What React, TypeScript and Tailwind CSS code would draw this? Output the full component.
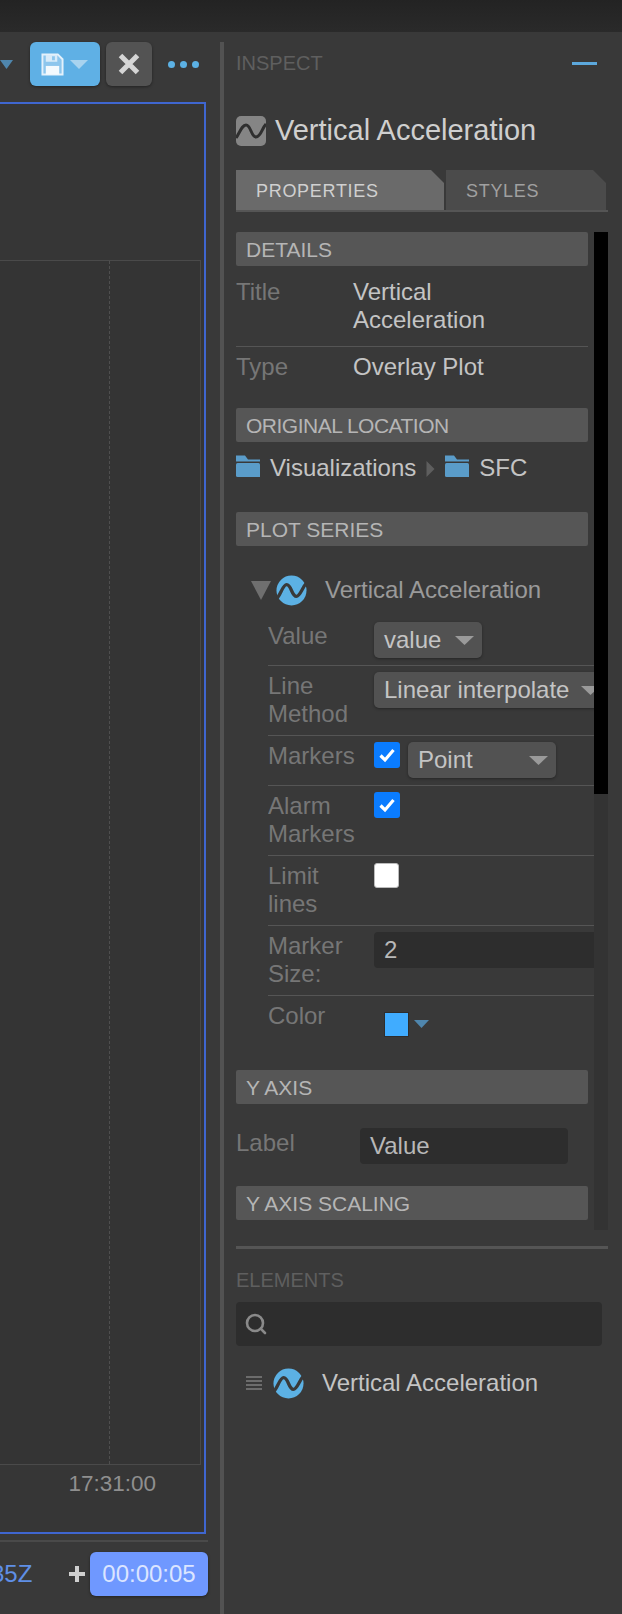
import React from 'react';
import { Search } from 'lucide-react';

const Wave = ({ className = '' }: { className?: string }) => (
    <svg viewBox="0 0 32 32" className={className}>
        <circle cx="16" cy="16" r="15.5" fill="#5cb1e4" />
        <path d="M1 24 C5 20 7 10 11 10 C16 10 16 22 21 22 C25 22 27 13 31 9" fill="none" stroke="#393939" strokeWidth="3.4" />
    </svg>
);

const Folder = () => (
    <svg viewBox="0 0 24 24" className="w-6 h-6 shrink-0">
        <path d="M0 1.5 L9 1.5 L12 5.5 L24 5.5 L24 7.5 L0 7.5 Z" fill="#5a9cc9" />
        <path d="M1.5 9 L22.5 9 Q24 9 24 10.5 L24 23 L1.5 23 Q0 23 0 21.5 L0 10.5 Q0 9 1.5 9 Z" fill="#5a9cc9" />
    </svg>
);

const Caret = ({ className = '' }: { className?: string }) => (
    <svg viewBox="0 0 20 10" preserveAspectRatio="none" className={className}>
        <path d="M0 0 L20 0 L10 10 Z" fill="currentColor" />
    </svg>
);

const Check = () => (
    <svg viewBox="0 0 26 26" className="w-[26px] h-[26px] shrink-0 rounded-[3px] bg-[#0a7cff]">
        <path d="M6.5 13.5 L11 18 L19.5 8" fill="none" stroke="#fff" strokeWidth="3.2" />
    </svg>
);

const SectionHeader = ({ title, className = '' }: { title: string; className?: string }) => (
    <div className={`h-[34px] flex items-center px-[10px] rounded-[2px] bg-[#565656] text-[21px] text-[#b5b5b5] leading-none whitespace-nowrap ${className}`}>{title}</div>
);

const Select = ({ label, className = '' }: { label: string; className?: string }) => (
    <div className={`h-9 flex items-center justify-between pl-[10px] pr-[8px] rounded-[5px] bg-[#525252] shadow-[0_1px_3px_rgba(0,0,0,0.35)] text-[24px] text-[#c4c4c4] ${className}`}>
        <span className="whitespace-nowrap">{label}</span>
        <Caret className="w-[19px] h-[9px] ml-3 shrink-0 text-[#9a9a9a]" />
    </div>
);

const SeriesRow = ({ label, height, children, last }: { label: React.ReactNode; height: string; children?: React.ReactNode; last?: boolean }) => (
    <div className={`flex ${height} ${last ? '' : 'border-b border-[#555]'}`}>
        <div className="w-[106px] shrink-0 pt-[6px] text-[24px] leading-[28px] text-[#767676]">{label}</div>
        <div className="flex-1 min-w-0 flex items-start gap-2 pt-[6px]">{children}</div>
    </div>
);

export default function App() {
    return (
        <div className="w-[622px] h-[1614px] overflow-hidden bg-[#393939] font-['Liberation_Sans',Arial,sans-serif]">
            <div className="h-8 bg-gradient-to-b from-[#232323] to-[#2a2a2a]"></div>

            <div className="flex h-[1582px]">
                {/* Main view */}
                <div className="w-[220px] shrink-0 flex flex-col">
                    <div className="h-[70px] pt-[10px] flex items-start">
                        <Caret className="w-[13px] h-[9px] mt-[18px] text-[#4f86ad]" />
                        <div className="ml-[17px] w-[70px] h-[44px] rounded-[6px] bg-[#5fb0e5] shadow-[0_1px_3px_rgba(0,0,0,0.4)] flex items-center pl-[11px] gap-[6px]">
                            <svg viewBox="0 0 24 24" className="w-[23px] h-[25px]">
                                <path d="M1.5 1.5 H17.5 L22.5 6.5 V22.5 H1.5 Z" fill="#e4f1fb" fillOpacity="0.35" stroke="#e4f1fb" strokeWidth="2" />
                                <path d="M5 2 H17 V9 H5 Z M11.5 3.5 V7.5 H14.5 V3.5 Z" fillRule="evenodd" fill="#d8ebf9" />
                                <rect x="5" y="13.5" width="14" height="9" fill="#f4fafe" />
                            </svg>
                            <Caret className="w-[18px] h-[9px] text-[#a8d3ef]" />
                        </div>
                        <div className="ml-[6px] w-[46px] h-[44px] rounded-[6px] bg-[#535353] shadow-[0_1px_3px_rgba(0,0,0,0.4)] flex items-center justify-center">
                            <svg viewBox="0 0 24 24" className="w-6 h-6">
                                <path d="M3.5 3.5 L20.5 20.5 M20.5 3.5 L3.5 20.5" stroke="#d5d5d5" strokeWidth="5" />
                            </svg>
                        </div>
                        <div className="ml-[16px] h-[44px] flex items-center gap-[5px]">
                            <span className="w-[7px] h-[7px] rounded-full bg-[#5cb1e4]"></span>
                            <span className="w-[7px] h-[7px] rounded-full bg-[#5cb1e4]"></span>
                            <span className="w-[7px] h-[7px] rounded-full bg-[#5cb1e4]"></span>
                        </div>
                    </div>

                    <div className="w-[206px] h-[1432px] bg-[#363636] border-t-2 border-r-2 border-b-2 border-[#3f66d0] flex flex-col">
                        <div className="h-[156px] shrink-0"></div>
                        <div className="w-[201px] h-[1205px] shrink-0 border-t border-r border-b border-[#4a4a4a] bg-[#343434]">
                            <div className="w-[110px] h-full border-r border-dashed border-[#4f4f4f]"></div>
                        </div>
                        <div className="w-[156px] pt-[6px] text-right text-[22.5px] leading-[26px] text-[#8f8f8f]">17:31:00</div>
                    </div>

                    <div className="w-[208px] mt-[6px] border-t-2 border-[#4a4a4a]"></div>

                    <div className="w-[208px] mt-[10px] flex items-center justify-between">
                        <span className="-ml-[9px] text-[24px] text-[#5f8fe6] leading-none">35Z</span>
                        <div className="flex items-center gap-[5px]">
                            <svg viewBox="0 0 16 16" className="w-[16px] h-[16px]">
                                <path d="M8 0 V16 M0 8 H16" stroke="#cfcfcf" strokeWidth="4" />
                            </svg>
                            <div className="w-[118px] h-[44px] rounded-[6px] bg-[#6f98ff] shadow-[0_1px_3px_rgba(0,0,0,0.4)] flex items-center justify-center text-[24px] text-[#dbe5ff]">00:00:05</div>
                        </div>
                    </div>
                </div>

                <div className="w-[4px] shrink-0 mt-[10px] bg-[#525252]"></div>

                {/* Inspector */}
                <div className="w-[372px] ml-3 shrink-0 flex flex-col">
                    <div className="h-[40px] mt-[11px] flex items-center justify-between pr-[11px] text-[20px] text-[#5f5f5f]">
                        <span>INSPECT</span>
                        <span className="w-[25px] h-[3px] bg-[#5ca8dc]"></span>
                    </div>

                    <div className="mt-[33px] h-[30px] flex items-center gap-[9px]">
                        <svg viewBox="0 0 30 30" className="w-[30px] h-[30px] rounded-[5px] bg-[#858585]">
                            <path d="M0 22 C4 16 6 9 10 9 C15 9 15 21 20 21 C25 21 26 12 30 8" fill="none" stroke="#2f2f2f" strokeWidth="3" />
                        </svg>
                        <span className="text-[29px] text-[#cfcfcf] whitespace-nowrap">Vertical Acceleration</span>
                    </div>

                    <div className="mt-[24px] h-[42px] flex gap-[2px] border-b-2 border-[#555]">
                        <div className="w-[208px] flex items-center pl-5 pt-[3px] bg-[#6a6a6a] text-[18px] tracking-[0.7px] text-[#d0d0d0] [clip-path:polygon(0_0,calc(100%-13px)_0,100%_13px,100%_100%,0_100%)]">PROPERTIES</div>
                        <div className="w-[160px] flex items-center pl-5 pt-[3px] bg-[#4b4b4b] text-[18px] tracking-[0.7px] text-[#a0a0a0] [clip-path:polygon(0_0,calc(100%-13px)_0,100%_13px,100%_100%,0_100%)]">STYLES</div>
                    </div>

                    <div className="mt-[20px] h-[998px] flex overflow-hidden">
                        <div className="w-[352px] shrink-0">
                            <SectionHeader title="DETAILS" />
                            <div className="h-[81px] pt-[12px] flex border-b border-[#555] text-[24px] leading-[28px]">
                                <span className="w-[117px] shrink-0 text-[#767676]">Title</span>
                                <span className="text-[#c4c4c4]">Vertical<br />Acceleration</span>
                            </div>
                            <div className="h-[61px] pt-[6px] flex text-[24px] leading-[28px]">
                                <span className="w-[117px] shrink-0 text-[#767676]">Type</span>
                                <span className="text-[#c4c4c4]">Overlay Plot</span>
                            </div>

                            <SectionHeader title="ORIGINAL LOCATION" className="tracking-[-0.5px]" />
                            <div className="h-[70px] pt-[12px] flex items-start text-[24px] leading-[28px] text-[#c4c4c4]">
                                <Folder />
                                <span className="ml-[10px]">Visualizations</span>
                                <svg viewBox="0 0 10 20" className="w-[9px] h-[16px] mt-[7px] ml-[10px] mr-[10px]">
                                    <path d="M0 0 L10 10 L0 20 Z" fill="#5e5e5e" />
                                </svg>
                                <Folder />
                                <span className="ml-[10px]">SFC</span>
                            </div>

                            <SectionHeader title="PLOT SERIES" />

                            <div className="mt-[27px] h-[34px] pl-[15px] flex items-center text-[24px] text-[#9a9a9a]">
                                <Caret className="w-[20px] h-[19px] text-[#6f6f6f]" />
                                <Wave className="w-[31px] h-[31px] ml-[5px]" />
                                <span className="ml-[18px] whitespace-nowrap">Vertical Acceleration</span>
                            </div>

                            <div className="mt-[9px] ml-[32px] w-[326px] overflow-hidden">
                                <SeriesRow label="Value" height="h-[50px]">
                                    <Select label="value" className="w-[108px]" />
                                </SeriesRow>
                                <SeriesRow label={<>Line<br />Method</>} height="h-[70px]">
                                    <Select label="Linear interpolate" className="w-[226px] shrink-0" />
                                </SeriesRow>
                                <SeriesRow label="Markers" height="h-[50px]">
                                    <Check />
                                    <Select label="Point" className="w-[148px]" />
                                </SeriesRow>
                                <SeriesRow label={<>Alarm<br />Markers</>} height="h-[70px]">
                                    <Check />
                                </SeriesRow>
                                <SeriesRow label={<>Limit<br />lines</>} height="h-[70px]">
                                    <div className="w-[25px] h-[25px] mt-[1px] rounded-[3px] bg-white border border-[#bbb]"></div>
                                </SeriesRow>
                                <SeriesRow label={<>Marker<br />Size:</>} height="h-[70px]">
                                    <div className="w-[240px] h-9 shrink-0 flex items-center pl-[10px] rounded-[4px] bg-[#2d2d2d] text-[24px] text-[#b8b8b8]">2</div>
                                </SeriesRow>
                                <SeriesRow label="Color" height="h-[74px]" last>
                                    <div className="ml-[10px] mt-[10px] w-[25px] h-[25px] bg-[#40acff] border border-[#2d2d2d]"></div>
                                    <Caret className="w-[15px] h-[8px] mt-[18px] -ml-[3px] text-[#4f86ad]" />
                                </SeriesRow>
                            </div>

                            <SectionHeader title="Y AXIS" />
                            <div className="h-[82px] pt-[24px] flex">
                                <span className="w-[124px] shrink-0 pt-[1px] text-[24px] leading-[28px] text-[#767676]">Label</span>
                                <div className="w-[208px] h-9 flex items-center pl-[10px] rounded-[4px] bg-[#2d2d2d] text-[24px] text-[#b8b8b8]">Value</div>
                            </div>
                            <SectionHeader title="Y AXIS SCALING" />
                        </div>

                        <div className="ml-[6px] w-[14px] h-full bg-[#333]">
                            <div className="h-[562px] bg-black"></div>
                        </div>
                    </div>

                    <div className="mt-[16px] h-[3px] bg-[#555]"></div>

                    <div className="mt-[19px] text-[20px] leading-[24px] text-[#5f5f5f]">ELEMENTS</div>

                    <div className="mt-[10px] w-[366px] h-[44px] flex items-center pl-2 rounded-[4px] bg-[#2d2d2d]">
                        <Search size={24} strokeWidth={2.6} className="text-[#8a8a8a]" />
                    </div>

                    <div className="mt-[21px] h-[32px] flex items-center pl-[10px]">
                        <svg viewBox="0 0 16 15" className="w-4 h-[15px]">
                            <path d="M0 1 H16 M0 5 H16 M0 9 H16 M0 13 H16" stroke="#7e7e7e" strokeWidth="1.4" />
                        </svg>
                        <Wave className="w-[31px] h-[31px] ml-[11px]" />
                        <span className="ml-[18px] text-[24px] text-[#c4c4c4] whitespace-nowrap">Vertical Acceleration</span>
                    </div>
                </div>
            </div>
        </div>
    );
}
